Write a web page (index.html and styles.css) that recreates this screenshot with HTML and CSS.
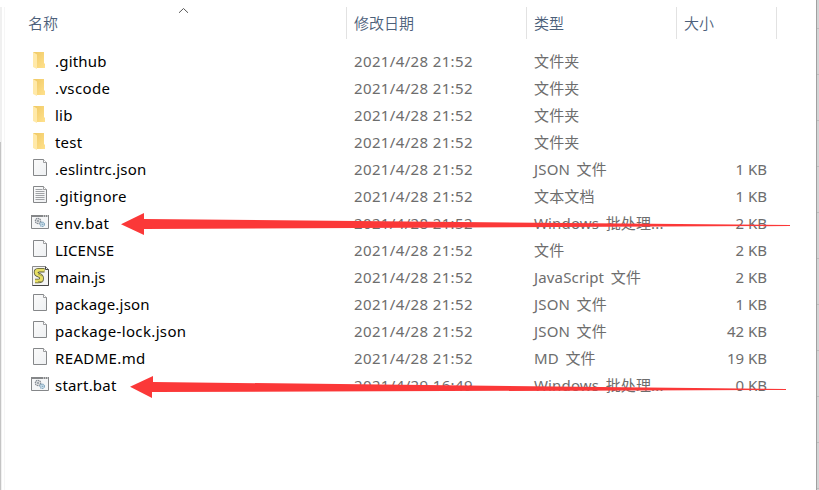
FILE: index.html
```
<!DOCTYPE html>
<html lang="zh-CN">
<head>
<meta charset="utf-8">
<title>文件列表</title>
<link rel="stylesheet" href="styles.css">
</head>
<body>
<svg class="defs" width="0" height="0" aria-hidden="true">
  <defs>
    <linearGradient id="gold" x1="0" y1="0" x2="1" y2="1"><stop offset="0" stop-color="#efc863"/><stop offset="1" stop-color="#ffe18d"/></linearGradient>
    <linearGradient id="paper" x1="0" y1="0" x2="1" y2="1"><stop offset="0" stop-color="#fbfbfb"/><stop offset="1" stop-color="#eef0f2"/></linearGradient>
  </defs>
  <symbol id="folder" viewBox="0 0 20 20">
    <path d="M3 2h11v11l1 1v4H5z" fill="url(#gold)"/>
    <path d="M3 2l4 2.500V19l-4-2z" fill="#ffe9a9"/>
  </symbol>
  <symbol id="file" viewBox="0 0 20 20">
    <path d="M3.500 1.500h10l3 3v13h-13z" fill="url(#paper)" stroke="#858789"/>
    <path d="M13.500 1.500v3h3" fill="#fff" stroke="#858789" stroke-width=".8"/>
  </symbol>
  <symbol id="text" viewBox="0 0 20 20">
    <use href="#file"/>
    <path d="M5.500 4.500h7M5.500 6.500h9M5.500 8.500h9M5.500 10.500h9M5.500 12.500h9M5.500 14.500h9" stroke="#96999c" stroke-width=".9"/>
  </symbol>
  <symbol id="bat" viewBox="0 0 20 20">
    <path d="M1.500 3.500h17v13h-17z" fill="#f5f6f7" stroke="#858789"/>
    <path d="M1 4h18" stroke="#858789" stroke-width="2"/>
    <path d="M13 4h1M15 4h1M17 4h1" stroke="#fff"/>
    <circle cx="8" cy="9" r="2.500" fill="#fff" stroke="#858b92" stroke-width="1.500" stroke-dasharray="1.400 .5"/>
    <circle cx="8" cy="9" r=".9" fill="#77808a"/>
    <circle cx="12.200" cy="12.300" r="2.100" fill="#e5f3fb" stroke="#82a6bd" stroke-width="1.400" stroke-dasharray="1.300 .5"/>
    <circle cx="12.200" cy="12.300" r=".7" fill="#668eaa"/>
  </symbol>
  <symbol id="script" viewBox="0 0 20 20">
    <path d="M2.500 .5h13l3 3v16h-16z" fill="#f4f4f4" stroke="#8b8b8b"/>
    <path d="M15.500.5v3h3v16h-16" fill="none" stroke="#444"/>
    <path d="M14.500 4.200H8.500C5 4.500 5.500 8 8.500 9c4 1.200 4.500 6-.5 6H5" fill="none" stroke="#55553a" stroke-width="4.600"/>
    <path d="M14.500 4.200H8.500C5 4.500 5.500 8 8.500 9c4 1.200 4.500 6-.5 6H5" fill="none" stroke="#e7df65" stroke-width="3"/>
    <path d="M9 5.500h5M8 15.500h5M8 8l4 2" stroke="#96924a" stroke-width=".8"/>
  </symbol>
</svg>
<main class="window">
  <aside class="rail"></aside>
  <section class="list">
    <svg class="sort" width="12" height="7" viewBox="0 0 12 7"><path d="M1 5.800L5.500 1.500l4.500 4.300" fill="none" stroke="#555"/></svg>
    <header class="head"><span>名称</span><span>修改日期</span><span>类型</span><span>大小</span></header>
    <div class="rows">
      <div class="row"><svg class="icon"><use href="#folder"/></svg><span class="name">.github</span><span class="date">2021/4/28 21:52</span><span class="type">文件夹</span><span class="size"></span></div>
      <div class="row"><svg class="icon"><use href="#folder"/></svg><span class="name wide">.vscode</span><span class="date">2021/4/28 21:52</span><span class="type">文件夹</span><span class="size"></span></div>
      <div class="row"><svg class="icon"><use href="#folder"/></svg><span class="name">lib</span><span class="date">2021/4/28 21:52</span><span class="type">文件夹</span><span class="size"></span></div>
      <div class="row"><svg class="icon"><use href="#folder"/></svg><span class="name">test</span><span class="date">2021/4/28 21:52</span><span class="type">文件夹</span><span class="size"></span></div>
      <div class="row"><svg class="icon"><use href="#file"/></svg><span class="name">.eslintrc.json</span><span class="date">2021/4/28 21:52</span><span class="type">JSON 文件</span><span class="size">1 KB</span></div>
      <div class="row"><svg class="icon"><use href="#text"/></svg><span class="name wide">.gitignore</span><span class="date">2021/4/28 21:52</span><span class="type">文本文档</span><span class="size">1 KB</span></div>
      <div class="row"><svg class="icon"><use href="#bat"/></svg><span class="name wide">env.bat</span><span class="date">2021/4/28 21:52</span><span class="type">Windows 批处理...</span><span class="size">2 KB</span></div>
      <div class="row"><svg class="icon"><use href="#file"/></svg><span class="name caps">LICENSE</span><span class="date">2021/4/28 21:52</span><span class="type">文件</span><span class="size">2 KB</span></div>
      <div class="row"><svg class="icon"><use href="#script"/></svg><span class="name tight">main.js</span><span class="date">2021/4/28 21:52</span><span class="type">JavaScript 文件</span><span class="size">2 KB</span></div>
      <div class="row"><svg class="icon"><use href="#file"/></svg><span class="name">package.json</span><span class="date">2021/4/28 21:52</span><span class="type">JSON 文件</span><span class="size">1 KB</span></div>
      <div class="row"><svg class="icon"><use href="#file"/></svg><span class="name wide">package-lock.json</span><span class="date">2021/4/28 21:52</span><span class="type">JSON 文件</span><span class="size">42 KB</span></div>
      <div class="row"><svg class="icon"><use href="#file"/></svg><span class="name wide">README.md</span><span class="date">2021/4/28 21:52</span><span class="type">MD 文件</span><span class="size">19 KB</span></div>
      <div class="row"><svg class="icon"><use href="#bat"/></svg><span class="name">start.bat</span><span class="date">2021/4/29 16:49</span><span class="type">Windows 批处理...</span><span class="size">0 KB</span></div>
    </div>
  </section>
  <aside class="edge"></aside>
  <svg class="arrows" width="819" height="490" viewBox="0 0 819 490">
    <path d="M121 224.300L144 213v6L790 225v1L144 229v6z"/>
    <path d="M130 386.700L153 376v6L786 389v1L152 392v6z"/>
  </svg>
</main>
</body>
</html>
```
FILE: styles.css
```
body {
  margin: 0;
  background: #fff;
  font-family: "Noto Sans", "Noto Sans CJK SC", sans-serif;
  font-size: 15px;
}
.defs { position: absolute; }
.window {
  position: relative;
  display: flex;
  width: 819px;
  height: 490px;
  overflow: hidden;
}
.rail {
  box-sizing: border-box;
  width: 5px;
  margin-top: 7px;
  border-right: 1px solid #f6f6f6;
  background:
    linear-gradient(#c4c4c4, #c4c4c4) 0 135px / 1px 100% no-repeat,
    linear-gradient(#f0f0f0, #f0f0f0) 0 0 / 2px 100% no-repeat;
}
.list {
  position: relative;
  flex: 1;
  padding-top: 7px;
}
.sort {
  position: absolute;
  left: 173px;
  top: 7px;
}
.head {
  display: grid;
  grid-template-columns: 342px 180px 150px 100px;
  height: 32px;
  line-height: 32px;
  color: #4c607a;
  font-family: "Noto Sans CJK SC", sans-serif;
  font-weight: 350;
}
.head span {
  padding-left: 7px;
  border-right: 1px solid #e2e2e2;
}
.head span:first-child { padding-left: 23px; }
.rows { padding-top: 9px; }
.row {
  display: grid;
  grid-template-columns: 25px 299px 180px 150px 83px;
  padding-left: 25px;
  height: 27px;
  line-height: 27px;
  color: #6d6d6d;
  white-space: nowrap;
}
.icon {
  width: 20px;
  height: 20px;
  margin-top: 2px;
}
.name { color: #000; letter-spacing: 0.2px; }
.wide { letter-spacing: 0.36px; }
.tight { letter-spacing: -0.05px; }
.caps { letter-spacing: 0.05px; }
.date { letter-spacing: 0.36px; }
.type { letter-spacing: 0.15px; word-spacing: 2.5px; }
.size { text-align: right; }
.edge {
  box-sizing: border-box;
  width: 3px;
  border-left: 1px solid #a0a0a0;
  background: repeating-linear-gradient(#d3d4d5 0 28px, #bcbdbe 28px 29px, #d3d4d5 29px 46px);
}
.arrows {
  position: absolute;
  inset: 0;
  fill: #fb3838;
}
```
